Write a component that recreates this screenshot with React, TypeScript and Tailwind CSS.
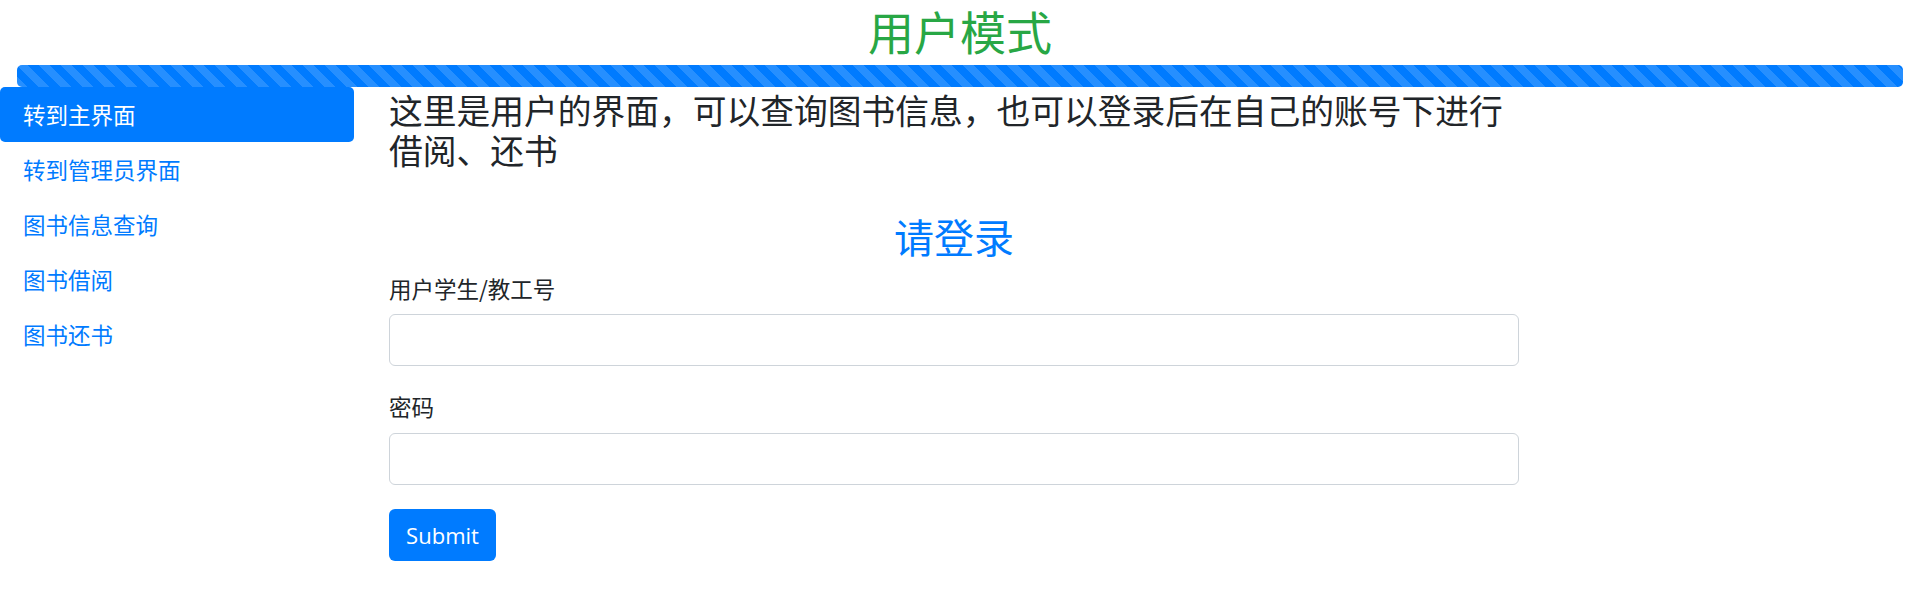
const navItems = ['转到主界面', '转到管理员界面', '图书信息查询', '图书借阅', '图书还书']

const App = () => {
  return (
    <div className="min-h-screen bg-white text-[#212529] font-['Noto_Sans_CJK_SC','Noto_Sans',sans-serif]">
      <div className="h-[65px] ml-[17px] mr-[2px] pt-[2px] text-center">
        <h1 className="text-[46px] leading-[56px] text-[#28a745]">用户模式</h1>
      </div>

      <div className="ml-[17px] mr-[2px] h-[22px] rounded-[5px] bg-[#007bff] bg-[linear-gradient(45deg,rgba(255,255,255,.15)_25%,transparent_25%,transparent_50%,rgba(255,255,255,.15)_50%,rgba(255,255,255,.15)_75%,transparent_75%,transparent)] bg-[length:22px_22px]" />

      <div className="flex">
        <nav className="w-[354px] flex flex-col">
          {navItems.map((item, index) => (
            <a
              key={index}
              href="#"
              className={
                index === 0
                  ? 'h-[55px] flex items-center px-[23px] text-[22.5px] rounded-[5px] bg-[#007bff] text-white'
                  : 'h-[55px] flex items-center px-[23px] text-[22.5px] text-[#007bff]'
              }
            >
              {item}
            </a>
          ))}
        </nav>

        <main className="ml-[35px] w-[1130px] flex flex-col">
          <p className="mt-[3px] text-[33.75px] leading-[40px]">
            这里是用户的界面，可以查询图书信息，也可以登录后在自己的账号下进行借阅、还书
          </p>

          <h2 className="mt-[42px] text-center text-[40px] leading-[48px] text-[#007bff]">请登录</h2>

          <form className="flex flex-col">
            <label className="mt-[11px] text-[22.5px] leading-[34px]">用户学生/教工号</label>
            <input
              type="text"
              className="mt-[9px] h-[52px] w-full rounded-[6px] border border-[#ced4da] px-3 text-[22px]"
            />

            <label className="mt-[23px] text-[22.5px] leading-[34px]">密码</label>
            <input
              type="password"
              className="mt-[10px] h-[52px] w-full rounded-[6px] border border-[#ced4da] px-3 text-[22px]"
            />

            <button
              type="button"
              className="mt-[24px] h-[52px] w-[107px] rounded-[6px] bg-[#007bff] text-white text-[22px] font-['Open_Sans',sans-serif]"
            >
              Submit
            </button>
          </form>
        </main>
      </div>
    </div>
  )
}

export default App
